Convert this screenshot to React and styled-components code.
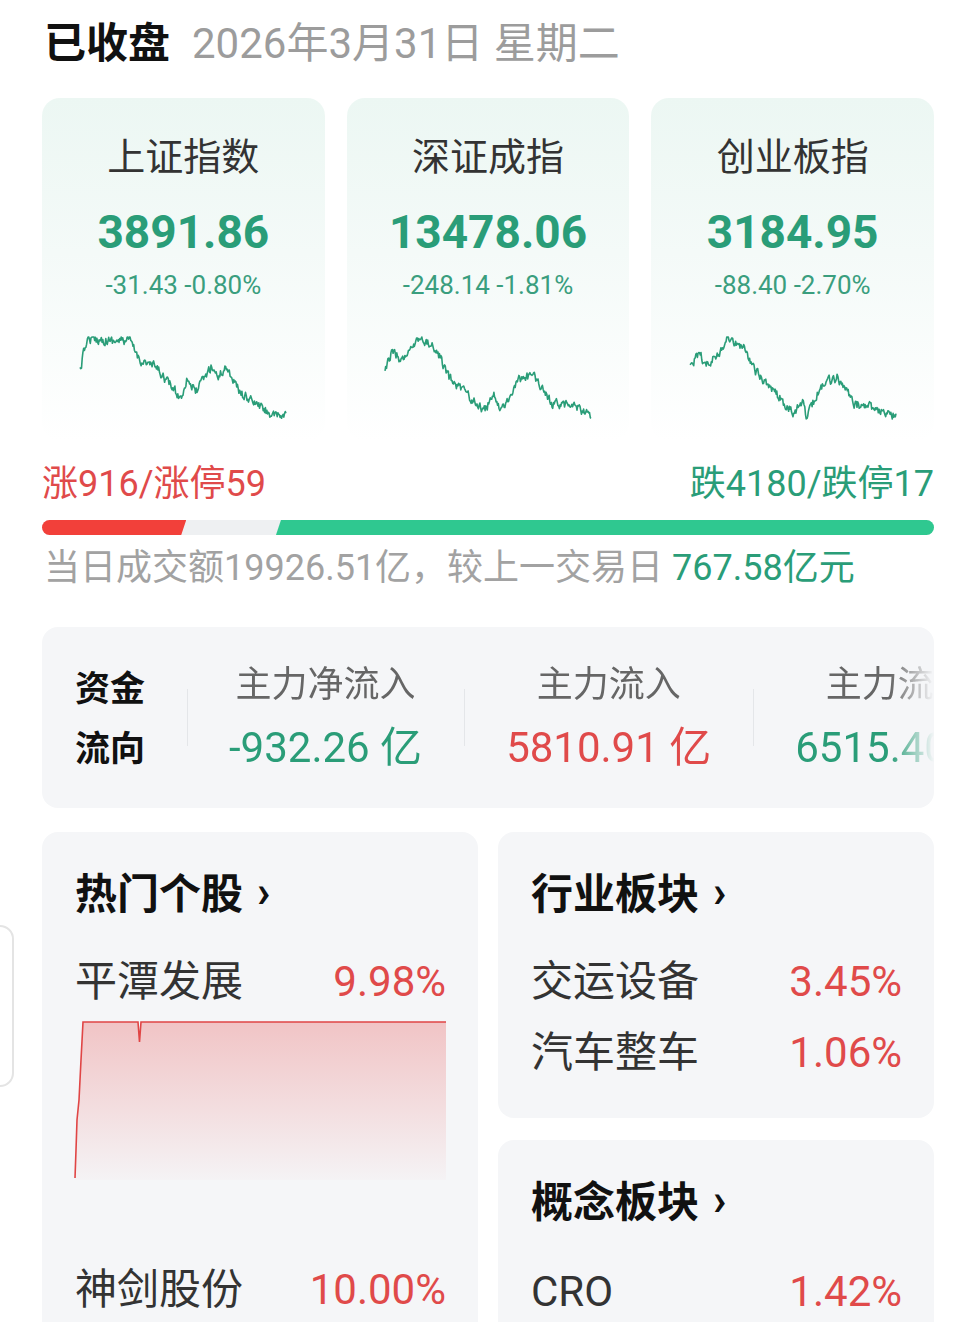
import React from "react";
import styled, { createGlobalStyle } from "styled-components";

const FONT = `Roboto, "Noto Sans CJK SC", "Noto Sans", sans-serif`;
const GREEN = "#2a9d78";
const RED = "#e04a4a";

const Global = createGlobalStyle`
  html, body { margin: 0; padding: 0; background: #fff; }
  body { font-family: ${FONT}; overflow: hidden; }
  * { box-sizing: border-box; }
`;

const Page = styled.div`
  width: 978px;
  height: 1322px;
  padding: 19px 44px 0 42px;
  overflow: hidden;
  position: relative;
  font-family: ${FONT};
`;

const Header = styled.div`
  display: flex;
  align-items: baseline;
  gap: 22px;
  padding-left: 2px;
  font-size: 42px;
  line-height: 50px;
`;
const Status = styled.span`
  font-weight: 700;
  color: #111;
`;
const DateText = styled.span`
  color: #9c9c9c;
  font-weight: 400;
`;

const Cards = styled.div`
  display: grid;
  grid-template-columns: repeat(3, 1fr);
  gap: 22px;
  margin-top: 29px;
`;
const IndexCard = styled.div`
  border-radius: 18px;
  background: linear-gradient(180deg, #ecf7f3 0%, #f4faf8 45%, #ffffff 100%);
  padding: 37px 0 20px;
  display: flex;
  flex-direction: column;
  align-items: center;
`;
const IndexName = styled.div`
  font-size: 38px;
  line-height: 44px;
  color: #333;
`;
const IndexValue = styled.div`
  margin-top: 27px;
  font-size: 46px;
  line-height: 52px;
  font-weight: 700;
  color: ${GREEN};
`;
const IndexChange = styled.div`
  margin-top: 12px;
  font-size: 26px;
  line-height: 30px;
  color: #3a9e7e;
`;
const Spark = styled.svg`
  margin-top: 35px;
  display: block;
`;

const BreadthRow = styled.div`
  display: flex;
  justify-content: space-between;
  margin-top: 22px;
  font-size: 36px;
  line-height: 42px;
`;
const Colored = styled.span`
  color: ${(p) => (p.$up ? RED : GREEN)};
`;
const Bar = styled.div`
  margin-top: 15px;
  height: 15px;
  border-radius: 8px;
  background: #eef0f2;
  overflow: hidden;
  display: flex;
  justify-content: space-between;
`;
const BarUp = styled.div`
  height: 100%;
  background: #f2403a;
  clip-path: polygon(0 0, 100% 0, calc(100% - 5px) 100%, 0 100%);
`;
const BarDown = styled.div`
  height: 100%;
  background: #2fc890;
  clip-path: polygon(5px 0, 100% 0, 100% 100%, 0 100%);
`;
const Turnover = styled.div`
  margin-top: 12px;
  font-size: 36px;
  line-height: 42px;
  color: #a2a2a2;
  padding-left: 2px;
  white-space: nowrap;
`;

const FlowCard = styled.div`
  margin-top: 38px;
  height: 181px;
  border-radius: 16px;
  background: #f5f6f8;
  display: flex;
  align-items: center;
  overflow: hidden;
`;
const FlowLabel = styled.div`
  width: 145px;
  flex: none;
  padding-left: 33px;
  font-size: 35px;
  line-height: 60px;
  font-weight: 700;
  color: #111;
  margin-top: 4px;
`;
const FlowScroll = styled.div`
  flex: 1;
  display: flex;
  overflow: hidden;
  -webkit-mask-image: linear-gradient(90deg, #000 calc(100% - 44px), transparent 100%);
  mask-image: linear-gradient(90deg, #000 calc(100% - 44px), transparent 100%);
`;
const FlowCol = styled.div`
  flex: none;
  padding: 0 42px;
  display: flex;
  flex-direction: column;
  align-items: center;
  position: relative;
  &::before {
    content: "";
    position: absolute;
    left: 0;
    top: 26px;
    bottom: 26px;
    width: 1px;
    background: #e4e6e9;
  }
`;
const FlowTitle = styled.div`
  font-size: 36px;
  line-height: 44px;
  color: #666;
  white-space: nowrap;
`;
const FlowValue = styled.div`
  margin-top: 17px;
  font-size: 42px;
  line-height: 48px;
  white-space: nowrap;
  color: ${(p) => (p.$up ? RED : GREEN)};
`;

const Bottom = styled.div`
  margin-top: 24px;
  display: grid;
  grid-template-columns: 1fr 1fr;
  gap: 20px;
  align-items: start;
`;
const Column = styled.div`
  display: flex;
  flex-direction: column;
  gap: 22px;
`;
const Panel = styled.div`
  border-radius: 16px;
  background: #f5f6f8;
  padding: 39px 32px ${(p) => p.$pb || 41}px 33px;
  min-height: ${(p) => p.$minH || 0}px;
`;
const PanelTitle = styled.div`
  font-size: 42px;
  line-height: 48px;
  font-weight: 700;
  color: #111;
  display: flex;
  align-items: center;
  gap: 14px;
`;
const Chevron = styled.span`
  font-size: 44px;
  font-weight: 700;
  line-height: 48px;
  transform: translateY(-3px);
`;
const Row = styled.div`
  display: flex;
  justify-content: space-between;
  align-items: center;
  font-size: 42px;
  line-height: 48px;
  margin-top: ${(p) => p.$mt}px;
`;
const RowName = styled.span`
  color: #333;
`;
const RowPct = styled.span`
  color: ${RED};
`;
const MiniChart = styled.svg`
  display: block;
  margin-top: 14px;
  margin-left: -2px;
`;

const SideTab = styled.div`
  position: absolute;
  left: -2px;
  top: 925px;
  width: 16px;
  height: 162px;
  border: 2px solid #e4e4e4;
  border-radius: 0 14px 14px 0;
  background: #fff;
`;

function makeSpark(anchors, seed, w, h) {
  let s = seed;
  const rnd = () => {
    s = (s * 16807) % 2147483647;
    return s / 2147483647;
  };
  const N = 280;
  const pts = [];
  let n = 0;
  for (let i = 0; i <= N; i++) {
    const t = i / N;
    let k = 0;
    while (k < anchors.length - 2 && anchors[k + 1][0] < t) k++;
    const [t0, v0] = anchors[k];
    const [t1, v1] = anchors[k + 1];
    const f = t1 === t0 ? 0 : Math.min(1, Math.max(0, (t - t0) / (t1 - t0)));
    n = n * 0.4 + (rnd() - 0.5) * 0.1;
    let v = v0 + (v1 - v0) * f + n;
    v = Math.max(0, Math.min(1, v));
    pts.push(`${(t * (w - 2) + 1).toFixed(1)},${(v * (h - 4) + 2).toFixed(1)}`);
  }
  return pts.join(" ");
}

const indices = [
  {
    name: "上证指数",
    value: "3891.86",
    change: "-31.43 -0.80%",
    seed: 12345,
    anchors: [
      [0, 0.41], [0.034, 0.02], [0.19, 0.05], [0.24, 0.04], [0.29, 0.28], [0.37, 0.37],
      [0.49, 0.75], [0.52, 0.49], [0.56, 0.68], [0.64, 0.35], [0.67, 0.49], [0.71, 0.36],
      [0.78, 0.69], [0.88, 0.86], [0.95, 0.98], [1, 0.94],
    ],
  },
  {
    name: "深证成指",
    value: "13478.06",
    change: "-248.14 -1.81%",
    seed: 67891,
    anchors: [
      [0, 0.41], [0.034, 0.18], [0.084, 0.29], [0.17, 0.02], [0.25, 0.14], [0.31, 0.49],
      [0.48, 0.9], [0.53, 0.71], [0.56, 0.9], [0.65, 0.53], [0.72, 0.45], [0.81, 0.8],
      [0.91, 0.84], [1, 0.97],
    ],
  },
  {
    name: "创业板指",
    value: "3184.95",
    change: "-88.40 -2.70%",
    seed: 24680,
    anchors: [
      [0, 0.37], [0.04, 0.22], [0.09, 0.33], [0.14, 0.2], [0.18, 0.02], [0.26, 0.14],
      [0.3, 0.37], [0.5, 0.92], [0.545, 0.8], [0.565, 0.95], [0.645, 0.57], [0.715, 0.49],
      [0.8, 0.82], [0.87, 0.84], [1, 0.97],
    ],
  },
];

const flows = [
  { title: "主力净流入", value: "-932.26 亿", up: false },
  { title: "主力流入", value: "5810.91 亿", up: true },
  { title: "主力流出", value: "6515.40 亿", up: false },
];

const breadth = { up: 916, flat: 570, down: 4180 };

export default function App() {
  const total = breadth.up + breadth.flat + breadth.down;
  const upPct = (breadth.up / total) * 100;
  const downPct = (breadth.down / total) * 100;
  return (
    <>
      <Global />
      <Page>
        <Header>
          <Status>已收盘</Status>
          <DateText>2026年3月31日 星期二</DateText>
        </Header>

        <Cards>
          {indices.map((ix) => (
            <IndexCard key={ix.name}>
              <IndexName>{ix.name}</IndexName>
              <IndexValue>{ix.value}</IndexValue>
              <IndexChange>{ix.change}</IndexChange>
              <Spark width="208" height="86" viewBox="0 0 208 86">
                <polyline
                  points={makeSpark(ix.anchors, ix.seed, 208, 86)}
                  fill="none"
                  stroke="#2a9d78"
                  strokeWidth="1.6"
                  strokeLinejoin="round"
                />
              </Spark>
            </IndexCard>
          ))}
        </Cards>

        <BreadthRow>
          <Colored $up>涨916/涨停59</Colored>
          <Colored>跌4180/跌停17</Colored>
        </BreadthRow>
        <Bar>
          <BarUp style={{ width: `${upPct}%` }} />
          <BarDown style={{ width: `${downPct}%` }} />
        </Bar>
        <Turnover>
          当日成交额19926.51亿，较上一交易日 <Colored>767.58亿元</Colored>
        </Turnover>

        <FlowCard>
          <FlowLabel>
            资金
            <br />
            流向
          </FlowLabel>
          <FlowScroll>
            {flows.map((f) => (
              <FlowCol key={f.title}>
                <FlowTitle>{f.title}</FlowTitle>
                <FlowValue $up={f.up}>{f.value}</FlowValue>
              </FlowCol>
            ))}
          </FlowScroll>
        </FlowCard>

        <Bottom>
          <Panel $minH={520}>
            <PanelTitle>
              热门个股<Chevron>›</Chevron>
            </PanelTitle>
            <Row $mt={39}>
              <RowName>平潭发展</RowName>
              <RowPct>9.98%</RowPct>
            </Row>
            <MiniChart width="373" height="160" viewBox="0 0 373 160">
              <defs>
                <linearGradient id="hotFill" x1="0" y1="0" x2="0" y2="1">
                  <stop offset="0" stopColor="#e85a5a" stopOpacity="0.32" />
                  <stop offset="1" stopColor="#e85a5a" stopOpacity="0.02" />
                </linearGradient>
              </defs>
              <path
                d="M2,158 L3,130 L4,100 L6,80 L8,40 L10,2 L65,2 L66.5,22 L68,2 L373,2 L373,160 L2,160 Z"
                fill="url(#hotFill)"
              />
              <path
                d="M2,158 L3,130 L4,100 L6,80 L8,40 L10,2 L65,2 L66.5,22 L68,2 L373,2"
                fill="none"
                stroke="#e04545"
                strokeWidth="1.6"
              />
            </MiniChart>
            <Row $mt={86}>
              <RowName>神剑股份</RowName>
              <RowPct>10.00%</RowPct>
            </Row>
          </Panel>

          <Column>
            <Panel>
              <PanelTitle>
                行业板块<Chevron>›</Chevron>
              </PanelTitle>
              <Row $mt={39}>
                <RowName>交运设备</RowName>
                <RowPct>3.45%</RowPct>
              </Row>
              <Row $mt={23}>
                <RowName>汽车整车</RowName>
                <RowPct>1.06%</RowPct>
              </Row>
            </Panel>
            <Panel $minH={220}>
              <PanelTitle>
                概念板块<Chevron>›</Chevron>
              </PanelTitle>
              <Row $mt={41}>
                <RowName>CRO</RowName>
                <RowPct>1.42%</RowPct>
              </Row>
            </Panel>
          </Column>
        </Bottom>

        <SideTab />
      </Page>
    </>
  );
}
